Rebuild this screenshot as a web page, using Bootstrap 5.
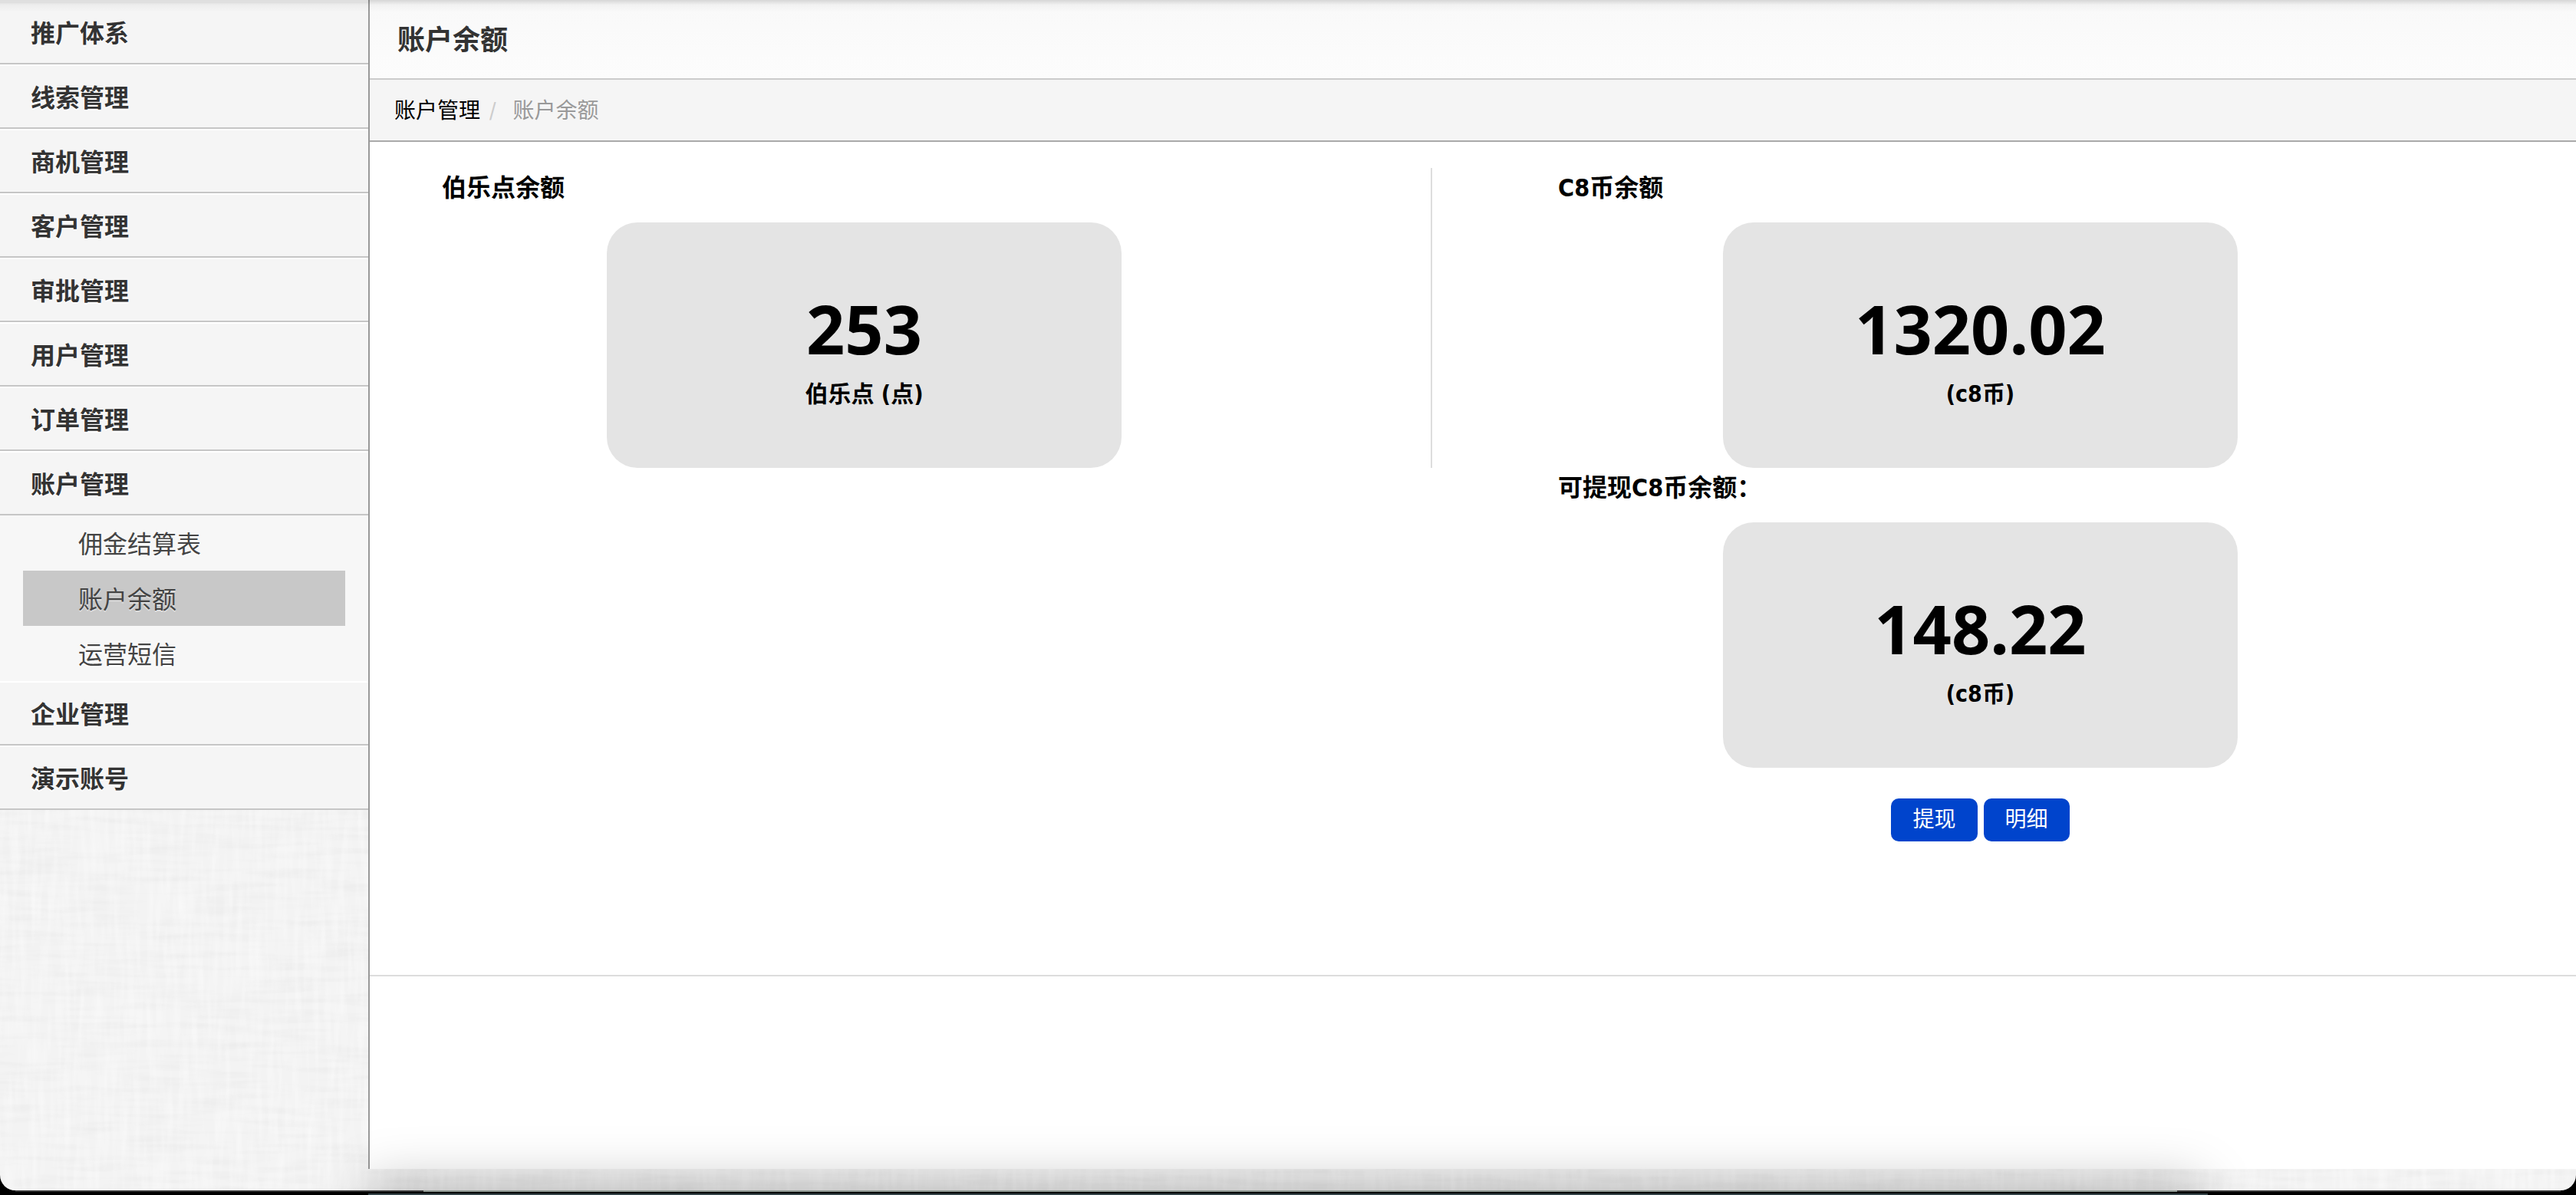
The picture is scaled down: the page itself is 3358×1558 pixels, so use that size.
<!DOCTYPE html>
<html lang="zh-CN">
<head>
<meta charset="utf-8">
<meta name="viewport" content="width=device-width, initial-scale=1">
<title>账户余额</title>
<link href="https://cdn.jsdelivr.net/npm/bootstrap@5.3.0/dist/css/bootstrap.min.css" rel="stylesheet">
<style>
body {
  font-family: "DejaVu Sans Condensed", "Noto Sans CJK SC", sans-serif;
  font-size: 32px;
  line-height: 48px;
  color: #000;
  background: #000;
}
.app-window {
  position: relative;
  overflow: hidden;
  border-radius: 0 0 20px 20px;
  background-color: #f3f3f3;
  isolation: isolate;
}
/* linen texture */
.linen {
  position: absolute;
  inset: 0;
  width: 100%;
  height: 100%;
  z-index: -1;
}
.top-shade {
  position: absolute;
  inset: 0 0 auto 0;
  height: 16px;
  background: linear-gradient(rgba(0,0,0,.14), rgba(0,0,0,.03) 40%, transparent);
  pointer-events: none;
}
.window-shade {
  position: absolute;
  left: 490px;
  right: 500px;
  bottom: -60px;
  height: 60px;
  box-shadow: 0 0 70px 10px rgba(0,0,0,.26);
  pointer-events: none;
}
.side { flex: 0 0 480px; }
.side a { color: #333; text-decoration: none; text-shadow: 0 2px 0 #fff; }
.side-main {
  display: block;
  padding: 18px 40px 14px;
  border-top: 2px solid #fff;
  border-bottom: 2px solid #c6c6c6;
  background: #f5f5f5;
  font-weight: 700;
}
.side-sub { padding: 0 30px; background: #f7f7f7; }
.side-sub a { display: block; padding: 14px 72px 10px; color: #444; }
.side-sub a.active { background: #c8c8c8; text-shadow: 0 2px 0 #ddd; }
.main-pane { background: #fff; border-left: 2px solid #999; margin-bottom: 28px; }
.page-head {
  padding: 29px 36px 25px;
  background: linear-gradient(#f9f9f9, #fcfcfc);
  border-bottom: 2px solid #ccc;
}
.page-head h1 { font-size: 36px; line-height: 48px; font-weight: 700; color: #333; }
.crumbs {
  padding: 17px 32px 14px;
  font-size: 28px;
  background: #f5f5f5;
  border-bottom: 2px solid #aaa;
}
.crumbs a { color: #000; text-decoration: none; }
.crumbs .sep { color: #ccc; padding: 0 22px 0 12px; }
.crumbs .here { color: #999; }
.balances {
  display: grid;
  grid-template-columns: 1289fr 2px 1265fr;
  padding: 34px 226px 174px 94px;
  border-bottom: 2px solid #ddd;
}
.divider { background: #ddd; }
.bal-left { padding-right: 188px; }
.bal-right { padding-left: 164px; }
.bal-title { font-size: 32px; line-height: 48px; font-weight: 700; padding-top: 2px; margin-bottom: 21px; }
.bal-box {
  width: 61%;
  height: 320px;
  padding-top: 18px;
  border-radius: 40px;
  background: #e4e4e4;
  font-weight: 700;
}
.bal-num { font-family: "Noto Sans", sans-serif; font-size: 88px; line-height: 96px; }
.bal-unit { font-size: 30px; line-height: 48px; margin-top: 14px; }
.btn-act {
  --bs-btn-color: #fff;
  --bs-btn-bg: #04c;
  --bs-btn-hover-color: #fff;
  --bs-btn-hover-bg: #03a;
  --bs-btn-font-size: 28px;
  --bs-btn-line-height: 40px;
  --bs-btn-padding-x: 28px;
  --bs-btn-padding-y: 8px;
  --bs-btn-border-width: 0;
  --bs-btn-border-radius: 10px;
}
.desk-edge { height: 2px; margin: 0 20px; background: linear-gradient(90deg, #333 532px, #8a948e 532px, #8a948e calc(100% - 500px), #333 calc(100% - 500px)); }
.desk { height: 4px; background: linear-gradient(90deg, #000 480px, #344448 480px, #344448 calc(100% - 480px), #000 calc(100% - 480px)) 0 2px no-repeat; }
</style>
</head>
<body class="d-flex flex-column min-vh-100">
<div class="app-window d-flex flex-grow-1">
  <svg class="linen" aria-hidden="true">
    <filter id="warp" x="0" y="0" width="100%" height="100%"><feTurbulence type="fractalNoise" baseFrequency="0.012 0.12" numOctaves="2" seed="3"/><feColorMatrix values="0 0 0 0 .5  0 0 0 0 .5  0 0 0 0 .5  .24 0 0 0 -.1"/></filter>
    <filter id="weft" x="0" y="0" width="100%" height="100%"><feTurbulence type="fractalNoise" baseFrequency="0.12 0.014" numOctaves="2" seed="8"/><feColorMatrix values="0 0 0 0 1  0 0 0 0 1  0 0 0 0 1  .8 0 0 0 -.3"/></filter>
    <rect width="100%" height="100%" filter="url(#warp)"/>
    <rect width="100%" height="100%" filter="url(#weft)"/>
  </svg>
  <nav class="side">
    <a class="side-main" href="#">推广体系</a>
    <a class="side-main" href="#">线索管理</a>
    <a class="side-main" href="#">商机管理</a>
    <a class="side-main" href="#">客户管理</a>
    <a class="side-main" href="#">审批管理</a>
    <a class="side-main" href="#">用户管理</a>
    <a class="side-main" href="#">订单管理</a>
    <a class="side-main" href="#">账户管理</a>
    <div class="side-sub">
      <a href="#">佣金结算表</a>
      <a class="active" href="#" aria-current="page">账户余额</a>
      <a href="#">运营短信</a>
    </div>
    <a class="side-main" href="#">企业管理</a>
    <a class="side-main" href="#">演示账号</a>
  </nav>
  <main class="main-pane flex-grow-1">
    <header class="page-head"><h1 class="m-0">账户余额</h1></header>
    <nav class="crumbs d-flex" aria-label="breadcrumb">
      <a href="#">账户管理</a><span class="sep">/</span><span class="here">账户余额</span>
    </nav>
    <div class="balances">
      <section class="bal-left">
        <h2 class="bal-title">伯乐点余额</h2>
        <div class="bal-box mx-auto d-flex flex-column align-items-center justify-content-center">
          <div class="bal-num">253</div>
          <div class="bal-unit">伯乐点 (点)</div>
        </div>
      </section>
      <div class="divider"></div>
      <section class="bal-right">
        <h2 class="bal-title">C8币余额</h2>
        <div class="bal-box mx-auto d-flex flex-column align-items-center justify-content-center">
          <div class="bal-num">1320.02</div>
          <div class="bal-unit">(c8币)</div>
        </div>
      </section>
      <div></div><div></div>
      <section class="bal-right">
        <h2 class="bal-title">可提现C8币余额：</h2>
        <div class="bal-box mx-auto d-flex flex-column align-items-center justify-content-center">
          <div class="bal-num">148.22</div>
          <div class="bal-unit">(c8币)</div>
        </div>
        <div class="d-flex justify-content-center gap-2 pt-4 mt-3">
          <button type="button" class="btn btn-act">提现</button>
          <button type="button" class="btn btn-act">明细</button>
        </div>
      </section>
    </div>
  </main>
  <div class="top-shade"></div>
  <div class="window-shade"></div>
</div>
<div class="desk-edge"></div>
<div class="desk"></div>
<script src="https://cdn.jsdelivr.net/npm/bootstrap@5.3.0/dist/js/bootstrap.bundle.min.js"></script>
</body>
</html>
